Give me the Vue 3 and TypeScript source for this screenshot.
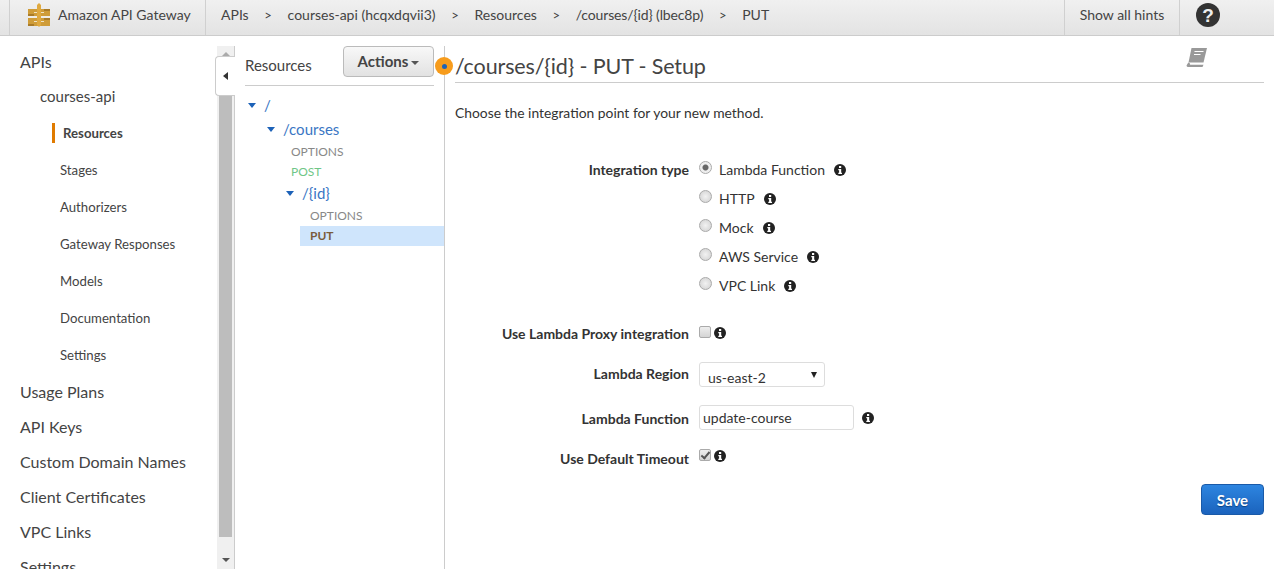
<script setup lang="ts">
const crumbs = ['APIs', 'courses-api (hcqxdqvii3)', 'Resources', '/courses/{id} (lbec8p)', 'PUT']
const subNav = ['Stages', 'Authorizers', 'Gateway Responses', 'Models', 'Documentation', 'Settings']
const topNav = ['Usage Plans', 'API Keys', 'Custom Domain Names', 'Client Certificates', 'VPC Links', 'Settings']
const types = ['Lambda Function', 'HTTP', 'Mock', 'AWS Service', 'VPC Link']
</script>

<template>
  <div class="page">
    <header class="topbar">
      <div class="brand">
        <svg class="logo" width="24" height="26" viewBox="0 0 24 26">
          <path fill="#cf9c38" d="M1 7h22v7H1zM1 16h22v8H1z" />
          <path fill="#a97b28" d="M1 12h6v2H1zM17 7h6v2h-6zM1 22h6v2H1zM17 16h6v2h-6z" />
          <path fill="#efe3c4" d="M7 10h3v1H7zM14 10h3v1h-3zM7 19h3v1H7zM14 19h3v1h-3z" />
          <path fill="#dfa93f" d="M10 3l2-2 2 2v20l-2 2-2-2z" />
          <path fill="#f6f0e0" d="M1 14.500h9v1H1zM14 14.500h9v1h-9z" />
        </svg>
        <span>Amazon API Gateway</span>
      </div>
      <nav class="crumbs">
        <template v-for="(c, i) in crumbs" :key="c">
          <span v-if="i > 0" class="sep">&gt;</span>
          <span :class="{ narrow: i === 3 }">{{ c }}</span>
        </template>
      </nav>
      <button class="hints">Show all hints</button>
      <div class="help">
        <svg width="26" height="26" viewBox="0 0 26 26">
          <circle cx="13" cy="13" r="12" fill="#333" />
          <text x="13" y="19.500" text-anchor="middle" class="help-q">?</text>
        </svg>
      </div>
    </header>

    <div class="body">
      <aside class="sidebar">
        <a class="top-item">APIs</a>
        <a class="api-item">courses-api</a>
        <a class="sub-item active"><span>Resources</span></a>
        <a v-for="s in subNav" :key="s" class="sub-item">{{ s }}</a>
        <a v-for="t in topNav" :key="t" class="top-item">{{ t }}</a>
      </aside>

      <div class="scrollbar">
        <i class="sb-up"></i>
        <div class="sb-thumb"></div>
        <i class="sb-down"></i>
        <div class="collapse"><i></i></div>
      </div>

      <section class="resources">
        <div class="res-head">
          <span>Resources</span>
          <button class="actions">Actions<i class="caret"></i></button>
        </div>
        <ul class="tree">
          <li class="node l0"><i class="tw"></i>/</li>
          <li class="node l1"><i class="tw"></i>/courses</li>
          <li class="method m1">OPTIONS</li>
          <li class="method m1 post">POST</li>
          <li class="node l2"><i class="tw"></i>/{id}</li>
          <li class="method m2">OPTIONS</li>
          <li class="method m2 put">PUT</li>
        </ul>
        <div class="hint-dot"><i></i></div>
      </section>

      <main class="main">
        <div class="title-row">
          <h1>/courses/{id} - PUT - Setup</h1>
          <svg class="book" width="22" height="20" viewBox="0 0 22 20">
            <path fill="#999" d="M5.500 0h15.500l-3.500 14.500H2.500z" />
            <path fill="#999" d="M2.300 14.500 .5 17.500q0 1.500 2 1.500h14l1-2.200H4.500q-1 0 -.5-1.300z" />
            <path stroke="#fff" stroke-width="1" d="M8.500 3.500h9M8 6.500h6.500" />
          </svg>
        </div>
        <p class="intro">Choose the integration point for your new method.</p>

        <div class="form">
          <div class="row type-row">
            <label class="lbl">Integration type</label>
            <div class="types">
              <div v-for="(t, i) in types" :key="t" class="type">
                <input type="radio" name="t" class="radio" :checked="i === 0" />
                <span class="type-name">{{ t }}</span>
                <svg class="info" width="12" height="12" viewBox="0 0 12 12">
                  <circle cx="6" cy="6" r="6" fill="#222" />
                  <rect x="5" y="2" width="2.200" height="2" fill="#fff" />
                  <path fill="#fff" d="M4.300 5h2.900v3.700h.8V10H4.300V8.700h.8V6.200h-.8z" />
                </svg>
              </div>
            </div>
          </div>

          <div class="row proxy-row">
            <label class="lbl">Use Lambda Proxy integration</label>
            <input type="checkbox" class="check" />
            <svg class="info near" width="12" height="12" viewBox="0 0 12 12">
              <circle cx="6" cy="6" r="6" fill="#222" />
              <rect x="5" y="2" width="2.200" height="2" fill="#fff" />
              <path fill="#fff" d="M4.300 5h2.900v3.700h.8V10H4.300V8.700h.8V6.200h-.8z" />
            </svg>
          </div>

          <div class="row region-row">
            <label class="lbl">Lambda Region</label>
            <div class="select"><span>us-east-2</span><i></i></div>
          </div>

          <div class="row fn-row">
            <label class="lbl">Lambda Function</label>
            <input class="text" value="update-course" />
            <svg class="info fn-info" width="12" height="12" viewBox="0 0 12 12">
              <circle cx="6" cy="6" r="6" fill="#222" />
              <rect x="5" y="2" width="2.200" height="2" fill="#fff" />
              <path fill="#fff" d="M4.300 5h2.900v3.700h.8V10H4.300V8.700h.8V6.200h-.8z" />
            </svg>
          </div>

          <div class="row timeout-row">
            <label class="lbl">Use Default Timeout</label>
            <input type="checkbox" class="check" checked />
            <svg class="info near" width="12" height="12" viewBox="0 0 12 12">
              <circle cx="6" cy="6" r="6" fill="#222" />
              <rect x="5" y="2" width="2.200" height="2" fill="#fff" />
              <path fill="#fff" d="M4.300 5h2.900v3.700h.8V10H4.300V8.700h.8V6.200h-.8z" />
            </svg>
          </div>
        </div>

        <div class="save-row"><button class="save">Save</button></div>
      </main>
    </div>
  </div>
</template>

<style>
html, body { margin: 0; background: #fff; overflow: hidden; }
</style>

<style scoped>
.page {
  width: 1274px;
  height: 574px;
  overflow: hidden;
  font-family: Lato, "Open Sans", sans-serif;
  font-size: 14px;
  color: #333;
  background: #fff;
}
.topbar {
  height: 35px;
  display: flex;
  align-items: center;
  background: linear-gradient(#f0f0f0, #e3e3e3);
  border-bottom: 1px solid #ccc;
  color: #444;
  font-size: 14px;
}
.brand {
  margin-left: 9px;
  width: 197px;
  height: 35px;
  display: flex;
  align-items: center;
  border-left: 1px solid #d0d0d0;
  border-right: 1px solid #d0d0d0;
  box-sizing: border-box;
}
.brand span { padding-bottom: 6px; }
.logo { margin: -6px 7px 0 17px; flex: none; }
.crumbs {
  margin-left: 15px;
  display: flex;
  align-items: center;
  flex: 1;
  padding-bottom: 6px;
}
.narrow { letter-spacing: -0.13px; }
.sep { margin: 0 15.700px; font-size: 13px; }
.hints {
  height: 35px;
  width: 115px;
  border: 0;
  border-left: 1px solid #d0d0d0;
  background: none;
  font: inherit;
  color: #444;
  padding: 0 0 6px;
}
.help {
  width: 95px;
  height: 35px;
  box-sizing: border-box;
  border-left: 1px solid #d0d0d0;
  padding: 2px 0 0 15px;
}
.help-q {
  font-family: "Liberation Sans", sans-serif;
  font-weight: 700;
  font-size: 19px;
  fill: #eee;
}

.body { display: flex; height: 533px; }
.sidebar {
  width: 217px;
  flex: none;
  overflow: hidden;
  padding: 8px 0 0 20px;
  box-sizing: border-box;
  display: flex;
  flex-direction: column;
  color: #444;
}
.sidebar a { display: block; flex: none; white-space: nowrap; }
.top-item { height: 35px; line-height: 35px; font-size: 16px; }
.api-item { height: 35px; line-height: 35px; margin-left: 20px; font-size: 15px; }
.sub-item { height: 37px; line-height: 37px; margin-left: 40px; font-size: 13.200px; }
.sub-item.active { height: 38px; margin-left: 32px; font-weight: 700; display: flex !important; align-items: center; }
.sub-item.active span { border-left: 3px solid #e07b00; padding-left: 8px; height: 20px; line-height: 20px; margin-bottom: 1px; }

.scrollbar {
  width: 17px;
  flex: none;
  margin-top: 10px;
  background: #f0f0f0;
  border-right: 1px solid #ccc;
  position: relative;
  display: flex;
  flex-direction: column;
  align-items: center;
}
.sb-up, .sb-down {
  flex: none;
  width: 0;
  height: 0;
  border-left: 4px solid transparent;
  border-right: 4px solid transparent;
}
.sb-up { margin-top: 6px; border-bottom: 4px solid #aaa; }
.sb-down { margin-top: 21px; border-top: 4px solid #555; }
.sb-thumb { width: 13px; height: 474px; flex: none; background: #bdbdbd; margin-top: 7px; }
.collapse {
  position: absolute;
  left: -2px;
  top: 10px;
  width: 19px;
  height: 38px;
  background: #fff;
  border: 1px solid #ccc;
  border-right: 0;
  border-radius: 4px 0 0 4px;
  display: flex;
  align-items: center;
  justify-content: center;
}
.collapse i {
  width: 0;
  height: 0;
  border-top: 4px solid transparent;
  border-bottom: 4px solid transparent;
  border-right: 5px solid #333;
}

.resources {
  width: 209px;
  flex: none;
  margin-top: 10px;
  border-right: 1px solid #ccc;
  position: relative;
}
.res-head {
  margin: 0 10px 0 10px;
  height: 39px;
  border-bottom: 1px solid #ccc;
  display: flex;
  align-items: flex-start;
  justify-content: space-between;
  font-size: 15px;
  color: #444;
}
.res-head > span { margin-top: 10px; }
.actions {
  width: 91px;
  height: 31px;
  border: 1px solid #bbb;
  border-radius: 4px;
  background: linear-gradient(#f8f8f8, #e2e2e2);
  font: 700 15px Lato, sans-serif;
  color: #444;
  padding: 0 0 2px;
}
.caret {
  display: inline-block;
  margin-left: 3px;
  vertical-align: middle;
  border-left: 4px solid transparent;
  border-right: 4px solid transparent;
  border-top: 4px solid #555;
}
.tree { list-style: none; margin: 0; padding: 7px 0 0; }
.node { color: #3a76c4; font-size: 15px; height: 24px; line-height: 24px; display: flex; align-items: center; }
.tw {
  width: 0;
  height: 0;
  border-left: 4.500px solid transparent;
  border-right: 4.500px solid transparent;
  border-top: 5px solid #1d62b8;
  margin-right: 8px;
}
.l0 { padding-left: 13px; }
.l1 { padding-left: 32px; height: 24px; margin-bottom: 1px; }
.l2 { padding-left: 51px; margin-top: -1px; height: 24px; margin-bottom: 1px; }
.method {
  font-size: 12px;
  height: 20px;
  line-height: 20px;
  color: #888;
}
.m1 { padding-left: 56px; }
.m2 { margin-left: 65px; padding-left: 10px; }
.post { color: #6fc687; }
.put { background: #cfe5fc; color: #7a5c3c; font-weight: 700; }
.hint-dot {
  position: absolute;
  right: -9px;
  top: 11px;
  width: 18px;
  height: 18px;
  border-radius: 50%;
  background: #f79c1c;
  display: flex;
  align-items: center;
  justify-content: center;
}
.hint-dot i { width: 5px; height: 5px; border-radius: 50%; background: #1d62b8; }

.main { flex: 1; padding: 0 10px; min-width: 0; }
.title-row {
  height: 46px;
  border-bottom: 1px solid #ccc;
  display: flex;
  align-items: flex-start;
  justify-content: space-between;
}
h1 {
  margin: 17px 0 0;
  font-size: 21.500px;
  letter-spacing: -0.12px;
  font-weight: 400;
  line-height: 26px;
  color: #444;
}
.book { margin: 12px 56px 0 0; }
.intro { margin: 20px 0 0; font-size: 13.850px; line-height: 20px; color: #333; }

.form { margin-top: 37px; }
.row { display: flex; align-items: flex-start; }
.lbl {
  width: 234px;
  text-align: right;
  font-weight: 700;
  margin-right: 10px;
  color: #333;
  flex: none;
  font-size: 14px;
  line-height: 20px;
}
.type-row { height: 145px; }
.types { display: flex; flex-direction: column; }
.type { height: 29px; display: flex; align-items: flex-start; }
.type-name { line-height: 20px; margin: 0 9px 0 7px; color: #333; }
.radio {
  appearance: none;
  margin: 1px 0 0;
  width: 13px;
  height: 13px;
  border-radius: 50%;
  border: 1px solid #aaa;
  background: radial-gradient(#f2f2f2, #cfcfcf);
  box-sizing: border-box;
  position: relative;
}
.radio:checked { background: radial-gradient(circle, #666 0 2.500px, #eee 3.500px); }
.info { flex: none; margin-top: 4px; }
.check {
  appearance: none;
  margin: 0;
  width: 12px;
  height: 12px;
  border-radius: 2px;
  border: 1px solid #aaa;
  background: linear-gradient(#eee, #d4d4d4);
  box-sizing: border-box;
  position: relative;
}
.check:checked::after {
  content: "";
  position: absolute;
  left: 3px;
  top: 0;
  width: 3px;
  height: 7px;
  border: solid #555;
  border-width: 0 2px 2px 0;
  transform: rotate(40deg);
}
.near { margin-left: 3px; margin-top: 1px; }
.proxy-row { margin-top: 16px; height: 30px; }
.proxy-row .lbl { margin-top: 3px; }
.proxy-row .check { margin-top: 5px; }
.proxy-row .near { margin-top: 6px; }
.region-row { margin-top: 11px; }
.region-row .lbl { margin-top: 2px; }
.select {
  width: 126px;
  height: 25px;
  border: 1px solid #ddd;
  border-radius: 3px;
  box-sizing: border-box;
  display: flex;
  align-items: center;
  justify-content: space-between;
  padding: 5px 7px 0 8px;
  font-size: 14px;
  color: #333;
}
.select i {
  width: 0;
  height: 0;
  border-left: 3.500px solid transparent;
  border-right: 3.500px solid transparent;
  border-top: 6px solid #222;
  margin-top: -5px;
}
.fn-row { margin-top: 18px; }
.fn-row .lbl { margin-top: 4px; }
.text {
  width: 155px;
  height: 25px;
  box-sizing: border-box;
  border: 1px solid #ddd;
  border-radius: 3px;
  padding: 0 3px;
  font: 14px Lato, sans-serif;
  color: #333;
  outline: 0;
}
.fn-info { margin: 7px 0 0 8px; }
.timeout-row { margin-top: 19px; }
.save-row { display: flex; justify-content: flex-end; margin-top: 15px; }
.save {
  width: 63px;
  height: 31px;
  border: 1px solid #1a5aa8;
  border-radius: 4px;
  background: linear-gradient(#2d85e0, #1b63bd);
  color: #fff;
  font: 700 15px Lato, sans-serif;
  text-shadow: 0 1px 1px #0b3f80;
  padding: 0;
}
</style>
